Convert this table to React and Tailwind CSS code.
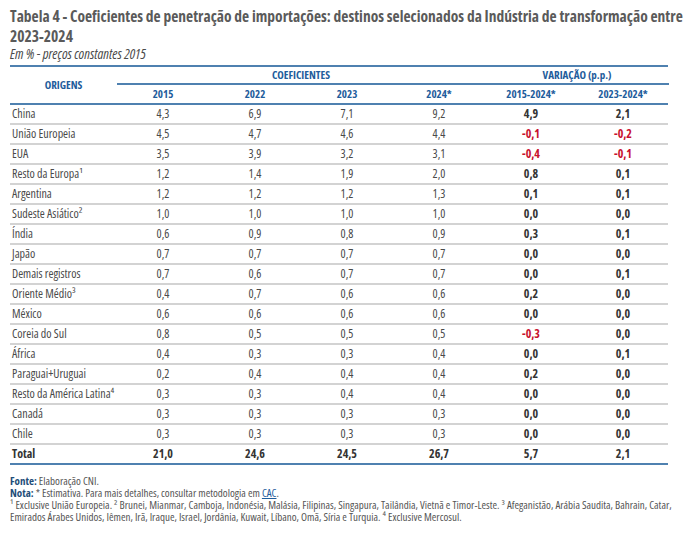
const rows = [
  ['China', '4,3', '6,9', '7,1', '9,2', '4,9', '2,1'],
  ['União Europeia', '4,5', '4,7', '4,6', '4,4', '-0,1', '-0,2'],
  ['EUA', '3,5', '3,9', '3,2', '3,1', '-0,4', '-0,1'],
  ['Resto da Europa¹', '1,2', '1,4', '1,9', '2,0', '0,8', '0,1'],
  ['Argentina', '1,2', '1,2', '1,2', '1,3', '0,1', '0,1'],
  ['Sudeste Asiático²', '1,0', '1,0', '1,0', '1,0', '0,0', '0,0'],
  ['Índia', '0,6', '0,9', '0,8', '0,9', '0,3', '0,1'],
  ['Japão', '0,7', '0,7', '0,7', '0,7', '0,0', '0,0'],
  ['Demais registros', '0,7', '0,6', '0,7', '0,7', '0,0', '0,1'],
  ['Oriente Médio³', '0,4', '0,7', '0,6', '0,6', '0,2', '0,0'],
  ['México', '0,6', '0,6', '0,6', '0,6', '0,0', '0,0'],
  ['Coreia do Sul', '0,8', '0,5', '0,5', '0,5', '-0,3', '0,0'],
  ['África', '0,4', '0,3', '0,3', '0,4', '0,0', '0,1'],
  ['Paraguai+Uruguai', '0,2', '0,4', '0,4', '0,4', '0,2', '0,0'],
  ['Resto da América Latina⁴', '0,3', '0,3', '0,4', '0,4', '0,0', '0,0'],
  ['Canadá', '0,3', '0,3', '0,3', '0,3', '0,0', '0,0'],
  ['Chile', '0,3', '0,3', '0,3', '0,3', '0,0', '0,0'],
];

function Row({ r }) {
  return (
    <div className="grid grid-cols-[107px_repeat(6,92px)] h-5 items-center border-b-2 border-[#d3d3d3] text-[12px] text-[#4a4a4a]">
      <div className="pl-[2px] whitespace-nowrap">{r[0]}</div>
      {r.slice(1, 5).map((v, i) => (
        <div key={i} className="text-center">{v}</div>
      ))}
      {r.slice(5).map((v, i) => (
        <div key={i} className={`text-center font-bold ${v.startsWith('-') ? 'text-[#c8102e]' : 'text-[#333]'}`}>{v}</div>
      ))}
    </div>
  );
}

export default function App() {
  return (
    <div className="w-[695px] h-[540px] bg-white px-[10px] pt-[6px] font-['Open_Sans',sans-serif] [font-stretch:condensed]">
      <h1 className="text-[15.5px] leading-5 font-bold text-[#5a5a5a]">
        Tabela 4 - Coeficientes de penetração de importações: destinos selecionados da Indústria de transformação entre 2023-2024
      </h1>
      <p className="text-[14px] italic text-[#4a4a4a] leading-4">Em % - preços constantes 2015</p>
      <div className="w-[658px] mt-[3px] border-t-2 border-[#4f81b0]">
        <div className="grid grid-cols-[107px_repeat(6,92px)] grid-rows-[18px_18px] border-b-2 border-[#4f81b0] text-[11px] font-bold text-[#1f5d9c]">
          <div className="row-span-2 flex items-center justify-center">ORIGENS</div>
          <div className="col-span-4 flex items-center justify-center border-b-2 border-[#4f81b0]">COEFICIENTES</div>
          <div className="col-span-2 flex items-center justify-center border-b-2 border-[#4f81b0]">VARIAÇÃO (p.p.)</div>
          <div className="flex items-center justify-center">2015</div>
          <div className="flex items-center justify-center">2022</div>
          <div className="flex items-center justify-center">2023</div>
          <div className="flex items-center justify-center">2024*</div>
          <div className="flex items-center justify-center">2015-2024*</div>
          <div className="flex items-center justify-center">2023-2024*</div>
        </div>
        {rows.map((r) => (
          <Row key={r[0]} r={r} />
        ))}
        <div className="grid grid-cols-[107px_repeat(6,92px)] h-5 items-center border-b-2 border-[#4f81b0] text-[12px] font-bold text-[#333]">
          <div className="pl-[2px]">Total</div>
          <div className="text-center">21,0</div>
          <div className="text-center">24,6</div>
          <div className="text-center">24,5</div>
          <div className="text-center">26,7</div>
          <div className="text-center">5,7</div>
          <div className="text-center">2,1</div>
        </div>
      </div>
      <div className="mt-[10px] text-[11px] leading-3 text-[#555]">
        <p><span className="font-bold text-[#1f4e79]">Fonte:</span> Elaboração CNI.</p>
        <p><span className="font-bold text-[#1f4e79]">Nota:</span> * Estimativa. Para mais detalhes, consultar metodologia em <span className="underline text-[#1f5d9c]">CAC</span>.</p>
        <p>¹ Exclusive União Europeia. ² Brunei, Mianmar, Camboja, Indonésia, Malásia, Filipinas, Singapura, Tailândia, Vietnã e Timor-Leste.  ³ Afeganistão, Arábia Saudita, Bahrain, Catar, Emirados Árabes Unidos, Iêmen, Irã, Iraque, Israel, Jordânia, Kuwait, Líbano, Omã, Síria e Turquia. ⁴ Exclusive Mercosul.</p>
      </div>
    </div>
  );
}
